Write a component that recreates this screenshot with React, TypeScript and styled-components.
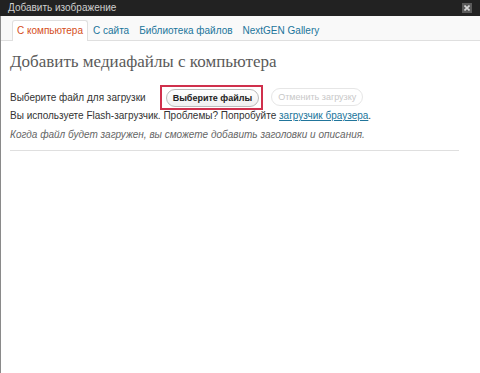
import React from "react";
import styled, { createGlobalStyle } from "styled-components";

const GlobalStyle = createGlobalStyle`
  html, body {
    margin: 0;
    padding: 0;
    background: #ffffff;
  }
  body {
    font-family: "Liberation Sans", Arial, sans-serif;
  }
`;

const tabs = ["С компьютера", "С сайта", "Библиотека файлов", "NextGEN Gallery"];

const App = () => {
  return (
    <>
      <GlobalStyle />
      <Dialog>
        <TitleBar>
          <Title>Добавить изображение</Title>
          <CloseBox>
            <svg width="6" height="6" viewBox="0 0 6 6">
              <path d="M0.5 0.5L5.5 5.5M5.5 0.5L0.5 5.5" stroke="#d8d8d8" strokeWidth="1.6" />
            </svg>
          </CloseBox>
        </TitleBar>
        <Frame>
          <TabBar>
            {tabs.map((t, i) => (
              <Tab key={t} active={i === 0}>
                {t}
              </Tab>
            ))}
          </TabBar>
          <Content>
            <Heading>Добавить медиафайлы с компьютера</Heading>
            <UploadRow>
              <Label>Выберите файл для загрузки</Label>
              <Highlight>
                <Button>Выберите файлы</Button>
              </Highlight>
              <Button disabled>Отменить загрузку</Button>
            </UploadRow>
            <Note>
              Вы используете Flash-загрузчик. Проблемы? Попробуйте{" "}
              <NoteLink href="#">загрузчик браузера</NoteLink>.
            </Note>
            <Hint>
              Когда файл будет загружен, вы сможете добавить заголовки и описания.
            </Hint>
            <Divider />
          </Content>
        </Frame>
      </Dialog>
    </>
  );
};

export default App;

const Dialog = styled.div`
  width: 480px;
  height: 373px;
  display: flex;
  flex-direction: column;
  overflow: hidden;
`;

const TitleBar = styled.div`
  height: 16px;
  flex: none;
  display: flex;
  align-items: center;
  justify-content: space-between;
  background: #222222;
  padding: 0 8px 0 8px;
`;

const Title = styled.div`
  color: #cfcfcf;
  font-size: 10px;
  line-height: 16px;
`;

const CloseBox = styled.div`
  width: 10px;
  height: 10px;
  background: #5a5a5a;
  display: flex;
  align-items: center;
  justify-content: center;
`;

const Frame = styled.div`
  flex: 1;
  border-left: 1px solid #8a8a8a;
  display: flex;
  flex-direction: column;
`;

const TabBar = styled.div`
  height: 24px;
  flex: none;
  display: flex;
  align-items: flex-end;
  padding-left: 11px;
  background: #f9f9f9;
  border-bottom: 1px solid #dfdfdf;
`;

const Tab = styled.div<{ active?: boolean }>`
  height: 20px;
  line-height: 20px;
  padding: 0 4px;
  margin-bottom: -1px;
  font-size: 10px;
  color: ${(p) => (p.active ? "#d54e21" : "#21759b")};
  background: ${(p) => (p.active ? "#ffffff" : "transparent")};
  border: 1px solid ${(p) => (p.active ? "#dfdfdf" : "transparent")};
  border-bottom: none;
  border-radius: 3px 3px 0 0;
`;

const Content = styled.div`
  padding: 0 21px 0 9px;
  display: flex;
  flex-direction: column;
`;

const Heading = styled.h3`
  margin: 11px 0 0 0;
  font-family: "Liberation Serif", Georgia, serif;
  font-weight: normal;
  font-size: 17px;
  line-height: 20px;
  color: #5a5a5a;
`;

const UploadRow = styled.div`
  margin-top: 16px;
  height: 18px;
  display: flex;
  align-items: center;
  font-size: 10px;
`;

const Label = styled.span`
  color: #333333;
  margin-right: 14px;
`;

/* red annotation frame around the "choose files" button */
const Highlight = styled.div`
  display: flex;
  margin: -4px 8px -4px 0;
  padding: 2px 2px 1px 4px;
  border: 2px solid #d0304c;
`;

const Button = styled.button`
  font-family: "Liberation Sans", Arial, sans-serif;
  font-size: 9px;
  font-weight: ${(p) => (p.disabled ? "normal" : "bold")};
  color: ${(p) => (p.disabled ? "#c8c8c8" : "#222222")};
  height: 18px;
  padding: 0 6px;
  background: ${(p) => (p.disabled ? "#ffffff" : "linear-gradient(#ffffff, #f0f0f0)")};
  border: 1px solid ${(p) => (p.disabled ? "#e6e6e6" : "#bbbbbb")};
  border-radius: 9px;
  line-height: 16px;
`;

const Note = styled.p`
  margin: 3px 0 0 0;
  font-size: 10px;
  line-height: 14px;
  color: #333333;
`;

const NoteLink = styled.a`
  color: #21759b;
  text-decoration: underline;
`;

const Hint = styled.p`
  margin: 5px 0 0 0;
  font-size: 10px;
  line-height: 14px;
  color: #666666;
  font-style: italic;
`;

const Divider = styled.div`
  margin-top: 8px;
  height: 1px;
  background: #dfdfdf;
`;
